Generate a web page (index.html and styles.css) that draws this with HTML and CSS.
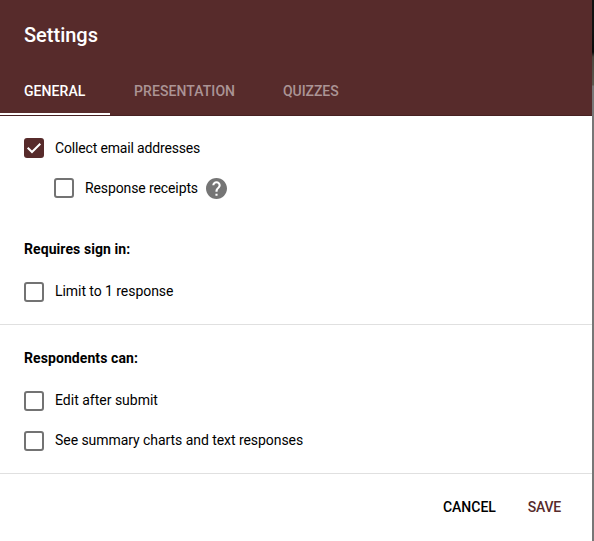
FILE: index.html
```html
<!DOCTYPE html>
<html lang="en">
<head>
<meta charset="utf-8">
<title>Settings</title>
<link rel="stylesheet" href="styles.css">
</head>
<body>
<main class="dialog">
  <header class="header">
    <h1 class="title">Settings</h1>
    <nav class="tabs">
      <a class="tab active">GENERAL</a>
      <a class="tab presentation">PRESENTATION</a>
      <a class="tab">QUIZZES</a>
    </nav>
  </header>
  <section class="group first">
    <div class="option"><span class="box checked"><svg viewBox="0 0 20 20"><path d="M3.7 9.7 8 14 16.300 5.700"/></svg></span><span class="collect">Collect email addresses</span></div>
    <div class="option nested"><span class="box"></span><span class="receipts">Response receipts</span><svg class="help" viewBox="2 2 20 20"><path d="M12 2C6.48 2 2 6.48 2 12s4.480 10 10 10 10-4.480 10-10S17.520 2 12 2zm1 17h-2v-2h2v2zm2.070-7.750l-.9.920C13.450 12.900 13 13.500 13 15h-2v-.5c0-1.100.45-2.100 1.170-2.830l1.240-1.260c.37-.36.59-.86.59-1.410 0-1.100-.9-2-2-2s-2 .9-2 2H8c0-2.210 1.790-4 4-4s4 1.790 4 4c0 .88-.36 1.680-.93 2.250z"/></svg></div>
    <h2 class="heading">Requires sign in:</h2>
    <div class="option low"><span class="box"></span><span class="label">Limit to 1 response</span></div>
  </section>
  <section class="group second">
    <h2 class="heading">Respondents can:</h2>
    <div class="option low"><span class="box"></span><span>Edit after submit</span></div>
    <div class="option low"><span class="box"></span><span class="label">See summary charts and text responses</span></div>
  </section>
  <footer class="actions"><a>CANCEL</a><a class="save">SAVE</a></footer>
</main>
<div class="edge"></div>
</body>
</html>
```
FILE: styles.css
```css
* { box-sizing: border-box; }
body { margin: 0; height: 541px; display: flex; overflow: hidden; background: #fff; font: 14px/20px Roboto, sans-serif; color: #000; }
.dialog { width: 592px; }
.edge { width: 2px; background: linear-gradient(#111 0 30px, #080a0a 52px, #4b473f 57px, #5c584e 85px, #777 86px); }
.header { height: 116px; background: #572b2b; border-bottom: 1px solid #472122; color: #fff; display: flex; flex-direction: column; justify-content: space-between; }
.title { margin: 0; padding: 23px 24px 0; font-size: 20px; line-height: 24px; font-weight: 500; }
.tabs { display: flex; height: 48px; }
.tab { padding: 14px 24px 0; font-weight: 500; color: #ab9495; letter-spacing: -.06px; }
.active { width: 110px; color: #fff; border-bottom: 2px solid #fff; letter-spacing: .06px; }
.presentation { width: 149px; letter-spacing: .08px; }
.group { padding: 0 24px; border-bottom: 1px solid #e0e0e0; }
.first { height: 209px; padding-top: 12px; }
.second { height: 149px; padding-top: 23px; }
.option { height: 40px; display: flex; align-items: center; }
.nested { padding-left: 30px; }
.box { width: 20px; height: 20px; border: 2px solid #737373; border-radius: 3px; margin-right: 11px; }
.low { align-items: flex-start; padding-top: 9px; }
.low .box { margin-top: 1px; }
.checked { background: #572b2b; border: 0; }
.checked svg { display: block; fill: none; stroke: #fff; stroke-width: 2; }
.collect { letter-spacing: -.16px; }
.receipts { letter-spacing: -.11px; }
.label { letter-spacing: -.055px; }
.help { width: 21px; height: 21px; margin-left: 8px; fill: #757575; }
.heading { margin: 0; font-size: 14px; line-height: 20px; font-weight: 700; letter-spacing: .08px; }
.first .heading { margin: 31px 0 13px; }
.second .heading { margin-bottom: 13px; }
.actions { display: flex; justify-content: flex-end; gap: 32px; padding: 23px 31px 0 0; font-weight: 500; }
.save { color: #572b2b; letter-spacing: -.25px; }
```
